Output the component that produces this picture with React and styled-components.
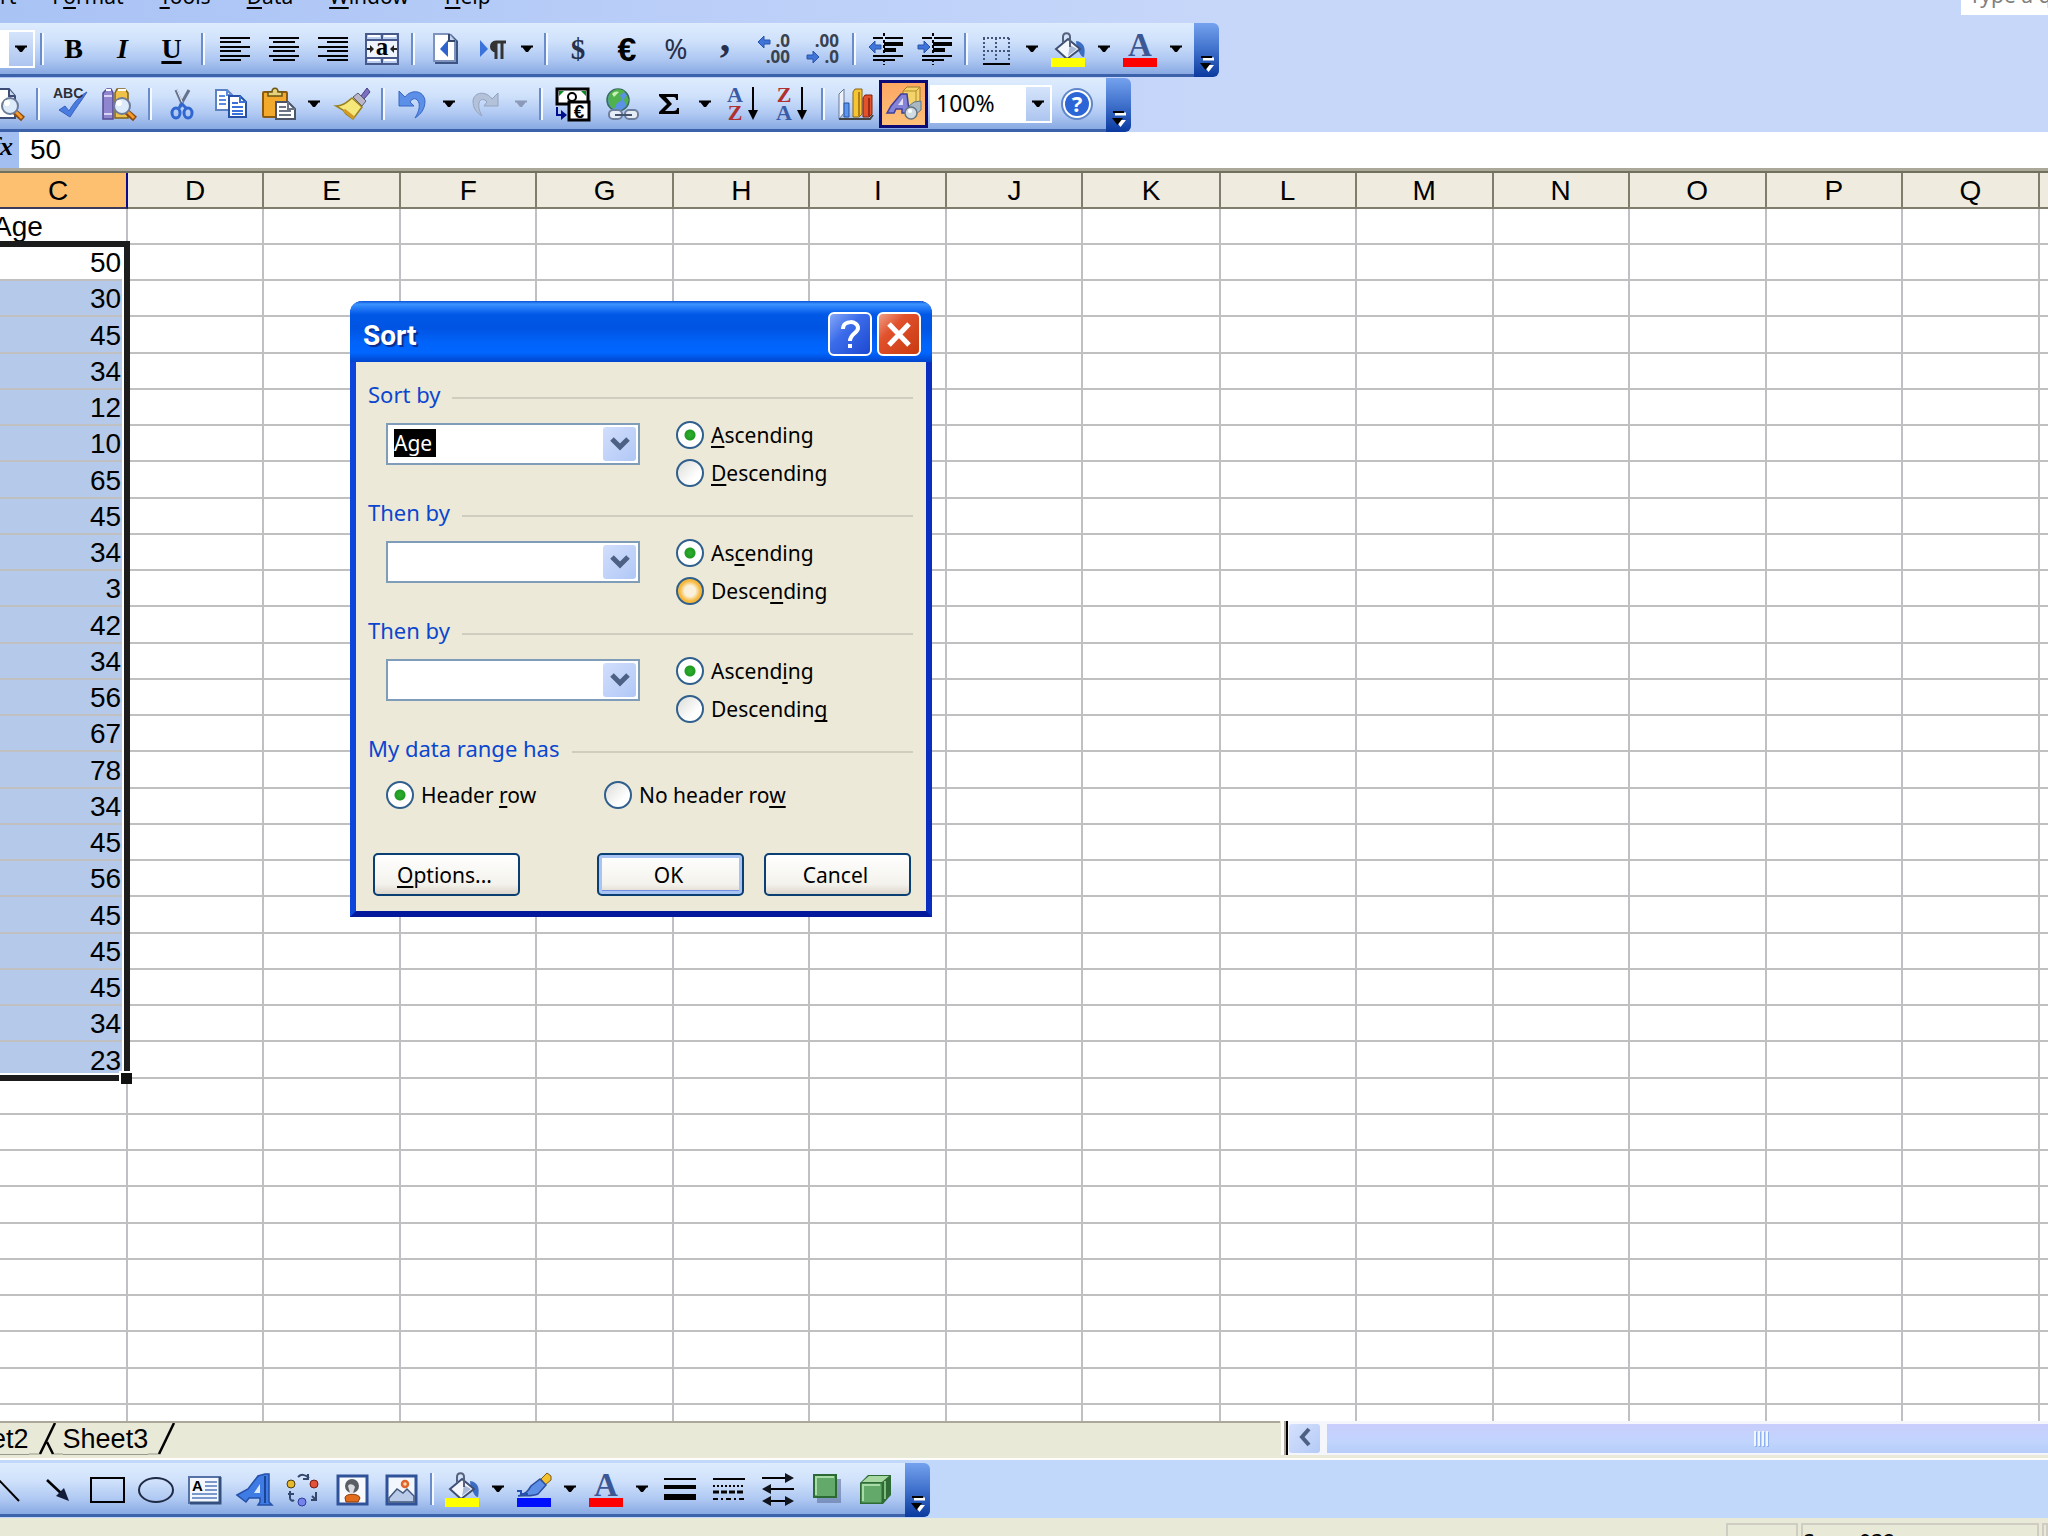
import React from "react";
import styled, { createGlobalStyle, css } from "styled-components";

const UI = `"Noto Sans", "Open Sans", sans-serif`;
const SHEET = `"Liberation Sans", Arial, sans-serif`;
const SERIF = `"Liberation Serif", "Times New Roman", serif`;

const Global = createGlobalStyle`
  *, *::before, *::after { box-sizing: border-box; }
  html, body { margin: 0; height: 100%; overflow: hidden; }
  body { font-family: ${UI}; font-size: 21px; color: #000; background: #ece9d8; }
  #root { height: 100%; }
  button, input, select { font: inherit; color: inherit; margin: 0; }
  u { text-decoration-thickness: 2px; text-underline-offset: 3px; text-decoration-skip-ink: none; }
`;

const App_ = styled.div`
  position: relative;
  display: flex;
  flex-direction: column;
  height: 100vh;
  overflow: hidden;
`;

/* ---------- docks and toolbars ---------- */

const TopDock = styled.header`
  display: flex;
  flex-direction: column;
  align-items: flex-start;
  gap: 1px;
  background: linear-gradient(90deg, #a9c3f5 0, #c7d7fa 60%);
`;

const MenuBar = styled.nav`
  display: flex;
  justify-content: space-between;
  align-items: flex-end;
  width: 100%;
  height: 22px;
  overflow: hidden;
`;

const MenuList = styled.div`
  display: flex;
  gap: 36px;
  margin-left: -42px;
  padding-bottom: 12px;
`;

const MenuItem = styled.button`
  padding: 0;
  border: 0;
  background: none;
  line-height: 28px;
`;

const Question = styled.input`
  width: 87px;
  height: 32px;
  margin-bottom: 7px;
  padding: 0 0 8px 8px;
  border: 0;
  background: #fff;
  line-height: 28px;
  &::placeholder { color: #808080; opacity: 1; }
`;

const Bar = styled.div`
  display: flex;
  height: 54px;
  margin-left: ${(p) => p.$shift || 0}px;
`;

const BarBody = styled.div`
  display: flex;
  align-items: center;
  padding-right: 5px;
  border-bottom: 3px solid #3b62ab;
  background: linear-gradient(#deecfd 0, #cfe1fb 35%, #b0c9f3 70%, #88a9e2 100%);
`;

const BarEnd = styled.button`
  display: flex;
  align-items: flex-end;
  justify-content: center;
  width: 25px;
  height: 54px;
  padding: 0 0 4px;
  border: 0;
  border-radius: 0 6px 6px 0;
  background: linear-gradient(#74a2ee 0, #3f70cb 50%, #0a3a9f 100%);
`;

const Divider = styled.span`
  width: 4px;
  height: 32px;
  margin: 0 5px;
  border-left: 2px solid #6a8ccb;
  border-right: 2px solid #f4f8ff;
`;

const Tool = styled.button`
  display: flex;
  align-items: center;
  justify-content: center;
  width: ${(p) => (p.$split ? 46 : 49)}px;
  height: 48px;
  padding: 0;
  border: 0;
  background: none;
  ${(p) =>
    p.$pressed &&
    css`
      border: 3px solid #0b0b78;
      background: linear-gradient(#fda762, #fdc07a);
    `}
`;

const Drop = styled(Tool)`
  width: ${(p) => (p.$narrow ? 24 : 26)}px;
`;

const Letter = styled.span`
  font: ${(p) => (p.$italic ? "italic " : "")}bold 28px/32px ${SERIF};
  text-decoration: ${(p) => (p.$under ? "underline" : "none")};
  text-decoration-thickness: 3px;
  text-underline-offset: 3px;
`;

const Icon = styled.svg`
  display: block;
  width: 36px;
  height: 36px;
  overflow: visible;
`;

const BarSelect = styled.label`
  display: grid;
  grid-template-columns: 1fr 24px;
  width: ${(p) => p.$width}px;
  height: 38px;
  border: 2px solid #fff;
  background: #fff;
  margin-left: ${(p) => p.$before || 0}px;
  & > select {
    appearance: none;
    min-width: 0;
    padding: 0 0 2px 4px;
    border: 0;
    background: #fff;
    font-size: 23px;
    line-height: 28px;
  }
  & > span {
    display: flex;
    align-items: center;
    justify-content: center;
    background: linear-gradient(#d5e4fb, #adc5ef);
  }
`;

const Caret = ({ faded }) => (
  <svg width="12" height="8" viewBox="0 0 12 8">
    <path d="M0 0.500H12V2.500H10.500L7 7H5L1.500 2.500H0Z" fill={faded ? "#8b9ab8" : "#000"} />
  </svg>
);

const EndCap = ({ label }) => (
  <BarEnd aria-label={label}>
    <svg width="16" height="18" viewBox="0 0 16 18">
      <path d="M4 4H15" stroke="#fff" strokeWidth="3" />
      <path d="M2 2H13" stroke="#000" strokeWidth="2" />
      <path d="M4 10H15L9.500 17Z" fill="#fff" />
      <path d="M1 8H12L6.500 15Z" fill="#000" />
    </svg>
  </BarEnd>
);

/* ---------- icons ---------- */

const rows = (list, w = 2) =>
  list.map(([x1, y, x2, t], i) => (
    <path key={i} d={`M${x1} ${y}H${x2}`} stroke="#000" strokeWidth={t || w} />
  ));

const AlignLeft = () => <Icon>{rows([[3, 7, 33], [3, 11, 24], [3, 16, 33], [3, 20, 24], [3, 25, 33], [3, 29, 24]])}</Icon>;
const AlignCenter = () => <Icon>{rows([[3, 7, 33], [7, 11, 29], [3, 16, 33], [7, 20, 29], [3, 25, 33], [7, 29, 29]])}</Icon>;
const AlignRight = () => <Icon>{rows([[3, 7, 33], [12, 11, 33], [3, 16, 33], [12, 20, 33], [3, 25, 33], [12, 29, 33]])}</Icon>;

const MergeIcon = () => (
  <Icon>
    <rect x="2" y="3" width="32" height="30" fill="#b9cdf0" stroke="#46598a" strokeWidth="2" />
    <path d="M3 9H33M3 27H33M18 3V9M18 27V33" stroke="#46598a" strokeWidth="2" />
    <path d="M4 5H16M20 5H32M4 29H16M20 29H32" stroke="#fff" strokeWidth="2" />
    <rect x="3" y="10" width="30" height="16" fill="#eef3fc" />
    <text x="18" y="24" textAnchor="middle" fontFamily="Liberation Serif, serif" fontWeight="bold" fontSize="25">a</text>
    <path d="M3 18H9M27 18H33" stroke="#222" strokeWidth="2" />
    <path d="M6 14L10 18L6 22ZM30 14L26 18L30 22Z" fill="#222" />
  </Icon>
);

const PageIcon = () => (
  <Icon>
    <path d="M8 3H24L31 10V33H8Z" fill="#3d5584" />
    <path d="M7 3H22L28 10V30H7Z" fill="#fff" stroke="#7d93bd" strokeWidth="2" />
    <path d="M22 3V10H28" fill="#c6d4ec" stroke="#33466e" strokeWidth="2" />
    <path d="M21 9V26L13 18Z" fill="#2f62cc" />
  </Icon>
);

const PilcrowIcon = () => (
  <Icon>
    <path d="M6 9V26L14 18Z" fill="#3a72dc" />
    <path d="M32 11H22C16 11 16 20 22 20V28M22 11V28M28 11V28" fill="none" stroke="#333" strokeWidth="3" />
    <path d="M18 12H23V19H19Z" fill="#333" />
  </Icon>
);

const GlyphIcon = ({ children, font = "Liberation Serif, serif", size = 32, weight = "bold", fill = "#26304a", y = 28 }) => (
  <Icon>
    <text x="18" y={y} textAnchor="middle" fontFamily={font} fontWeight={weight} fontSize={size} fill={fill}>{children}</text>
  </Icon>
);

const Arrow = ({ x, y, left }) => (
  <path
    transform={`translate(${x} ${y})`}
    d={left ? "M12 -2H6V-6L0 0L6 6V2H12Z" : "M0 -2H6V-6L12 0L6 6V2H0Z"}
    fill="#3f74d8"
    stroke="#2a54ab"
  />
);

const DecimalIcon = ({ less }) => (
  <Icon fontFamily="Noto Sans, sans-serif" fontWeight="bold" fontSize="17" fill="#39424f">
    <text x="34" y="16" textAnchor="end">{less ? ".00" : ".0"}</text>
    <text x="34" y="32" textAnchor="end">{less ? ".0" : ".00"}</text>
    {less ? <Arrow x={2} y={26} /> : <Arrow x={2} y={11} left />}
  </Icon>
);

const IndentIcon = ({ out }) => (
  <Icon>
    {rows([[5, 7, 15], [17, 7, 35], [5, 25, 35], [5, 29, 15], [17, 29, 27]])}
    {rows([[16, 13, 35], [16, 19, 28]], 4)}
    <path d="M16 2V6M16 9V26M16 28V34" stroke="#000" strokeWidth="2" strokeDasharray="3 2" />
    {out ? <Arrow x={1} y={16} left /> : <Arrow x={1} y={16} />}
  </Icon>
);

const BordersIcon = () => (
  <Icon>
    <path d="M5 7H32M5 20H32M6 7V30M18 7V30M31 7V30" stroke="#44557c" strokeWidth="2" strokeDasharray="2 2" fill="none" />
    <path d="M5 33H32" stroke="#000" strokeWidth="2" />
  </Icon>
);

const FillIcon = () => (
  <Icon>
    <path d="M26 10C34 11 36 17 34 26C30 26 30 20 27 19Z" fill="#3c6dc4" />
    <path d="M18 8L30 18L17 28L6 18Z" fill="#f3f6fc" stroke="#3f4f74" strokeWidth="2" />
    <path d="M20 14L27 18L18 25Z" fill="#a9b8d6" />
    <path d="M13 12V6C13 1 20 1 20 6V16" fill="none" stroke="#56617c" strokeWidth="2" />
    <rect x="1" y="27" width="34" height="9" fill="#ff0" />
  </Icon>
);

const FontColorIcon = () => (
  <Icon>
    <text x="18" y="25" textAnchor="middle" fontFamily="Liberation Serif, serif" fontWeight="bold" fontSize="33" fill="#3c5795">A</text>
    <rect x="1" y="27" width="34" height="9" fill="#f00" />
  </Icon>
);

const LineColorIcon = () => (
  <Icon>
    <path d="M25 8L31 2L35 5V9L29 14Z" fill="#f4c22f" stroke="#7a5a10" />
    <path d="M24 8L30 14L22 23C15 26 9 24 2 25C10 23 12 20 15 15Z" fill="#5d8fe6" stroke="#2a4fa0" strokeWidth="1.500" />
    <path d="M1 20H5V23H12" fill="none" stroke="#2450b0" strokeWidth="2" />
    <rect x="1" y="27" width="34" height="9" fill="#0010ff" />
  </Icon>
);

const Magnifier = () => (
  <>
    <path d="M26 26L34 33" stroke="#8a4a10" strokeWidth="6" />
    <path d="M26 25L33 32" stroke="#f29a2e" strokeWidth="3" />
    <circle cx="21" cy="20" r="8" fill="#dceafa" stroke="#6d7c98" strokeWidth="2" />
    <circle cx="18" cy="17" r="3" fill="#fff" />
  </>
);

const PreviewIcon = () => (
  <Icon>
    <path d="M2 3H20L26 10V32H2Z" fill="#fff" stroke="#3c4e78" strokeWidth="2" />
    <path d="M20 3V10H26" fill="#cbd7ea" stroke="#3c4e78" strokeWidth="2" />
    <Magnifier />
  </Icon>
);

const SpellIcon = () => (
  <Icon>
    <path d="M7 24L13 20L17 25C21 18 27 10 35 6C30 14 23 23 18 31Z" fill="#4a7be0" stroke="#3560bd" />
    <text x="1" y="12" fontFamily="Liberation Sans, sans-serif" fontSize="14" fontWeight="bold" fill="#2b2f38">ABC</text>
  </Icon>
);

const ResearchIcon = () => (
  <Icon>
    <path d="M2 7L6 3H10L12 7V33H2Z" fill="#9086cf" stroke="#554a94" strokeWidth="1.500" />
    <path d="M14 7L16 3H24L27 7V32H14Z" fill="#f0c14a" stroke="#80611a" strokeWidth="1.500" />
    <path d="M3 10H11M3 28H11" stroke="#d9d4f4" strokeWidth="2" />
    <path d="M5 4H10M17 4H25" stroke="#fff" strokeWidth="2" />
    <Magnifier />
  </Icon>
);

const CutIcon = () => (
  <Icon>
    <path d="M12 4L19 20M25 4L16 20" stroke="#66728c" strokeWidth="3" />
    <path d="M13 4L19 18" stroke="#eef2f8" />
    <ellipse cx="12" cy="27" rx="4" ry="5" fill="none" stroke="#2f66cf" strokeWidth="3" />
    <ellipse cx="24" cy="27" rx="4" ry="5" fill="none" stroke="#2f66cf" strokeWidth="3" />
    <path d="M15 22L18 18L22 22" stroke="#2f66cf" strokeWidth="3" fill="none" />
  </Icon>
);

const CopyIcon = () => (
  <Icon>
    <path d="M3 4H14L19 9V24H3Z" fill="#fff" stroke="#5d82c4" strokeWidth="2" />
    <path d="M14 4V9H19M6 10H12M6 14H13M6 18H13" fill="none" stroke="#5b8ae0" strokeWidth="2" />
    <path d="M16 10H27L33 16V31H16Z" fill="#fff" stroke="#2450a8" strokeWidth="2" />
    <path d="M27 10V16H33M19 17H25M19 21H30M19 25H30M19 28H30" fill="none" stroke="#3a70d8" strokeWidth="2" />
  </Icon>
);

const PasteIcon = () => (
  <Icon>
    <rect x="3" y="6" width="24" height="25" rx="1" fill="#f2a92c" stroke="#8a5b10" strokeWidth="2" />
    <path d="M8 10V6H12C12 1 18 1 18 6H22V10Z" fill="#e6d27a" stroke="#6b5616" strokeWidth="1.500" />
    <path d="M16 16H28L35 23V33H16Z" fill="#fff" stroke="#4b5468" strokeWidth="2" />
    <path d="M28 16V23H35M19 21H26M19 25H31M19 29H31" fill="none" stroke="#6b7486" strokeWidth="2" />
  </Icon>
);

const BrushIcon = () => (
  <Icon>
    <path d="M27 10L33 2L36 6L30 13Z" fill="#7a6fc0" stroke="#463c86" />
    <path d="M19 11L24 7L32 15L28 20Z" fill="#b9b6c8" stroke="#5f5b72" />
    <path d="M18 12L28 21L19 33L12 28L9 24L2 20C9 20 13 16 18 12Z" fill="#f6e77a" stroke="#9a8120" strokeWidth="1.500" />
    <path d="M10 24L20 32" stroke="#d29a24" strokeWidth="3" />
  </Icon>
);

const UndoIcon = () => (
  <Icon>
    <path d="M10 11C16 3 29 4 30 15C30 23 26 28 20 32C23 27 25 22 24 17C22 11 17 12 15 16L19 20H4V5Z" fill="#5b8fe8" stroke="#3867c4" />
  </Icon>
);

const RedoIcon = () => (
  <Icon>
    <path d="M25 13C20 5 7 5 6 15C6 22 9 26 15 30C13 26 11 22 12 17C13 12 18 13 20 16L17 20H31V7Z" fill="#b4c2d9" stroke="#93a3bf" />
  </Icon>
);

const EuroIcon = () => (
  <Icon>
    <rect x="2" y="3" width="31" height="15" fill="#fff" stroke="#000" strokeWidth="3" />
    <path d="M4 5H9L4 10ZM31 5H26L31 10Z" fill="#0a8a1e" />
    <circle cx="17" cy="11" r="4" fill="none" stroke="#000" strokeWidth="2" />
    <rect x="14" y="16" width="20" height="18" fill="#fff" stroke="#000" strokeWidth="3" />
    <text x="24" y="32" textAnchor="middle" fontFamily="Liberation Sans, sans-serif" fontWeight="bold" fontSize="19">€</text>
    <path d="M2 21V29H6" fill="none" stroke="#00108c" strokeWidth="2" />
    <path d="M6 24L12 29L6 34Z" fill="#00108c" />
  </Icon>
);

const GlobeIcon = () => (
  <Icon>
    <circle cx="14" cy="14" r="11" fill="#5a92e6" stroke="#3a6a60" strokeWidth="1.500" />
    <path d="M5 9C9 2 18 2 21 6L16 9L18 14L13 17L10 23C5 20 3 15 5 9ZM22 9L25 14L22 20L20 14Z" fill="#4fb24c" />
    <path d="M8 8C10 5 13 5 15 6L10 11Z" fill="#c8efb4" />
    <rect x="5" y="24" width="13" height="9" rx="4" fill="#e7edf7" stroke="#6e7f9d" strokeWidth="2" />
    <rect x="21" y="24" width="13" height="9" rx="4" fill="#e7edf7" stroke="#6e7f9d" strokeWidth="2" />
    <path d="M11 29H28" stroke="#44536f" strokeWidth="2" />
  </Icon>
);

const SigmaIcon = () => (
  <Icon>
    <path d="M8 8H27V14H25C25 11 24 11 21 11H15L21 18L14 25H22C25 25 26 24 26 22H28V28H8V26L16 18L8 10Z" fill="#000" />
  </Icon>
);

const SortIcon = ({ top, bottom, flip }) => (
  <Icon fontFamily="Liberation Serif, serif" fontWeight="bold" fontSize="22">
    <text x="10" y="16" textAnchor="middle" fill={flip ? "#b03030" : "#3a5ba6"}>{top}</text>
    <text x="10" y="34" textAnchor="middle" fill={flip ? "#3a5ba6" : "#b03030"}>{bottom}</text>
    <path d="M28 1V28" stroke="#000" strokeWidth="2" />
    <path d="M23 24H33L28 34Z" fill="#000" />
  </Icon>
);

const ChartIcon = () => (
  <Icon>
    <path d="M2 8L7 3V27L2 33Z" fill="#eef3fb" stroke="#6c7892" />
    <path d="M2 33H33L36 29" fill="none" stroke="#444" strokeWidth="2" />
    <path d="M7 17H12V31H7Z" fill="#5c95ee" stroke="#24509e" />
    <path d="M16 6L18 3H25V28L22 31H16Z" fill="#f6c533" stroke="#8a6514" />
    <path d="M22 6V30" stroke="#b37e14" strokeWidth="2" />
    <path d="M26 12L28 9H35V28L32 31H26Z" fill="#e2532b" stroke="#86200e" />
    <path d="M32 12V30" stroke="#9e2a14" strokeWidth="2" />
  </Icon>
);

const DrawingIcon = () => (
  <Icon>
    <path d="M17 5L21 1H34V15L30 20H17Z" fill="#f4d36a" stroke="#9c7a24" />
    <path d="M17 5H30V20M30 5L34 1" fill="none" stroke="#b48d2c" />
    <path d="M1 27L5 20L15 8H21L23 25L26 27H16V23H10L8 27Z" fill="#8583d8" stroke="#3f3f9a" strokeWidth="1.500" />
    <path d="M12 19L17 12V19Z" fill="#e2e0f8" />
    <path d="M23 20L28 16L35 15V24L30 28H24Z" fill="#a9b9c4" stroke="#65757f" />
    <circle cx="25" cy="27" r="6" fill="#d0dce2" stroke="#65757f" strokeWidth="1.500" />
    <circle cx="24" cy="25" r="2" fill="#fff" />
  </Icon>
);

const HelpIcon = () => (
  <Icon>
    <circle cx="18" cy="18" r="15" fill="#fff" stroke="#6186c9" strokeWidth="2" />
    <circle cx="18" cy="18" r="12" fill="#2c66d6" />
    <text x="18" y="26" textAnchor="middle" fontFamily="Noto Sans, sans-serif" fontWeight="bold" fontSize="22" fill="#fff">?</text>
  </Icon>
);

const LineIcon = () => <Icon><path d="M6 7L28 30" stroke="#000" strokeWidth="2" /></Icon>;
const ArrowLineIcon = () => (
  <Icon>
    <path d="M7 9L24 25" stroke="#000" strokeWidth="2.500" />
    <path d="M29 30L16 25L24 17Z" fill="#101c38" />
  </Icon>
);
const RectIcon = () => <Icon><rect x="2" y="7" width="33" height="24" fill="none" stroke="#000" strokeWidth="2" /></Icon>;
const OvalIcon = () => <Icon><ellipse cx="18" cy="19" rx="17" ry="12" fill="none" stroke="#1f2a44" strokeWidth="2" /></Icon>;

const TextBoxIcon = () => (
  <Icon>
    <rect x="2" y="6" width="31" height="26" fill="#f4f8fe" stroke="#5572a8" strokeWidth="2" />
    <path d="M33 6V32H3" fill="none" stroke="#33507f" strokeWidth="3" />
    <text x="5" y="20" fontFamily="Liberation Sans, sans-serif" fontWeight="bold" fontSize="15">A</text>
    <path d="M18 11H30M18 15H30M18 19H30M5 23H30M5 27H30" stroke="#7b98cc" strokeWidth="2" />
  </Icon>
);

const WordArtIcon = () => (
  <Icon>
    <path d="M1 24L12 18L22 5L29 3H33V31L36 34H22L24 31V27H13L10 31Z" fill="#3f7be4" stroke="#2450a8" strokeWidth="1.500" />
    <path d="M18 22L24 13V22Z" fill="#dbe9fc" />
    <path d="M29 5V32" stroke="#1c4494" strokeWidth="2" />
  </Icon>
);

const DiagramIcon = () => (
  <Icon>
    <path d="M13 6C16 3 20 3 24 7M23 3V8H18M5 20V27C5 30 8 30 9 29M3 23H9M31 21V29H26M31 29L27 25" fill="none" stroke="#34486e" strokeWidth="2" />
    <circle cx="6" cy="13" r="4" fill="#e6b92c" stroke="#4a3c10" />
    <circle cx="29" cy="13" r="4" fill="#e0523a" stroke="#7c1c10" />
    <circle cx="17" cy="31" r="4" fill="#7584ea" stroke="#2f3c9a" />
  </Icon>
);

const ClipArtIcon = () => (
  <Icon>
    <rect x="4" y="5" width="29" height="28" fill="#f8fafe" stroke="#2f5299" strokeWidth="3" />
    <path d="M11 27C11 22 25 22 26 27L24 31H12Z" fill="#e06c1c" stroke="#8c3a08" />
    <circle cx="18" cy="15" r="7" fill="#5a5f66" />
    <path d="M14 15C15 12 20 13 21 16L19 22H16Z" fill="#d8dade" />
  </Icon>
);

const PictureIcon = () => (
  <Icon>
    <rect x="4" y="5" width="29" height="28" fill="#f2f6fd" stroke="#2f5299" strokeWidth="3" />
    <path d="M6 27L14 18L20 22L24 18L31 25V31H6Z" fill="#b9cbe9" stroke="#44587e" strokeWidth="1.500" />
    <circle cx="22" cy="13" r="3" fill="#fbd9a8" stroke="#e0642c" strokeWidth="2.500" />
  </Icon>
);

const WeightIcon = () => <Icon>{rows([[2, 8, 34, 2], [2, 16, 34, 4], [2, 26, 34, 6]])}</Icon>;
const DashIcon = () => (
  <Icon stroke="#000" strokeWidth="2">
    <path d="M2 8H34" />
    <path d="M2 15H34" strokeDasharray="2 2" />
    <path d="M2 21H34" strokeDasharray="6 2" strokeWidth="3" />
    <path d="M2 28H34" strokeDasharray="5 3 2 3" />
  </Icon>
);
const ArrowStyleIcon = () => (
  <Icon>
    <path d="M2 7H32M4 18H34M5 30H31" stroke="#000" strokeWidth="2" />
    <path d="M25 2L34 7L25 12ZM11 13L2 18L11 23ZM11 25L2 30L11 35ZM25 25L34 30L25 35Z" fill="#10141c" />
  </Icon>
);
const ShadowIcon = () => (
  <Icon>
    <rect x="8" y="8" width="24" height="24" fill="#5e719c" opacity="0.600" />
    <rect x="5" y="4" width="22" height="22" fill="#62a96a" stroke="#2c6a34" strokeWidth="2" />
    <path d="M7 24V6H25" fill="none" stroke="#a9dba8" strokeWidth="2" />
  </Icon>
);
const CubeIcon = () => (
  <Icon>
    <path d="M2 12L10 4H33V24L25 33H2Z" fill="#2f6b36" />
    <path d="M4 11L11 5H31L24 11Z" fill="#a8d8a2" />
    <rect x="3" y="12" width="21" height="20" fill="#62a96a" stroke="#2c6a34" />
    <path d="M5 30V14H22" fill="none" stroke="#a9dba8" strokeWidth="2" />
    <path d="M27 10V28" stroke="#7fbd80" strokeWidth="2" />
  </Icon>
);

/* ---------- formula bar ---------- */

const FormulaBar = styled.div`
  display: flex;
  height: 36px;
  background: #fff;
`;

const FxButton = styled.button`
  display: flex;
  justify-content: flex-end;
  width: 19px;
  padding: 0 6px 0 0;
  border: 0;
  background: #a3bff2;
  font: italic bold 26px/30px ${SERIF};
`;

const FormulaInput = styled.input`
  flex: 1;
  min-width: 0;
  padding: 0 0 0 11px;
  border: 0;
  background: #fff;
  && { font: 28px/32px ${SHEET}; }
`;

/* ---------- worksheet ---------- */

const SheetArea = styled.main`
  flex: 1;
  min-height: 0;
  overflow: hidden;
  border-top: 3px solid #aca899;
  background: #fff;
`;

const Sheet = styled.table`
  table-layout: fixed;
  width: 2186px;
  margin-left: -10px;
  border-spacing: 0;
  border-top: 2px solid #716f5e;
  font: 28px/32px ${SHEET};
`;

const Col = styled.col`
  width: ${(p) => p.$width}px;
`;

const HeadCell = styled.th`
  height: 36px;
  padding: 2px 0 0;
  border-right: 2px solid ${(p) => (p.$on ? "#0a0a8c" : "#7f7d6c")};
  border-bottom: 2px solid ${(p) => (p.$on ? "#3c3a5c" : "#7f7d6c")};
  background: ${(p) => (p.$on ? "#fdbf70" : "#efebde")};
  font-weight: 400;
`;

const Row = styled.tr`
  height: 36px;
  &:nth-child(4n) { height: 37px; }
`;

const Cell = styled.td`
  position: relative;
  padding: 2px 5px 0 3px;
  border-right: 2px solid #c0c0c4;
  border-bottom: 2px solid #c0c0c0;
  background: ${(p) => (p.$selected ? "#b5caea" : "#fff")};
  text-align: ${(p) => (p.$number ? "right" : "left")};
  line-height: 32px;
`;

const Selection = styled.span`
  position: absolute;
  z-index: 1;
  top: -4px;
  left: -4px;
  right: -4px;
  height: 840px;
  border: 6px solid #1c1c1c;
  box-shadow: inset 0 0 0 2px #fff;
  &::after {
    content: "";
    position: absolute;
    right: -8px;
    bottom: -9px;
    width: 13px;
    height: 13px;
    border: 2px solid #fff;
    border-width: 2px 0 0 2px;
    background: #111;
  }
`;

/* ---------- sheet tabs and scrollbar ---------- */

const TabStrip = styled.div`
  display: grid;
  grid-template-columns: 5fr 3fr;
  height: 37px;
  background: #e9e9d8;
`;

const Tabs = styled.div`
  display: flex;
  height: 34px;
  border-top: 2px solid #aca899;
  overflow: hidden;
  & > :first-child { margin-left: -57px; }
`;

const Tab = styled.button`
  padding: 0;
  border: 0;
  border-bottom: 1px solid #9a988a;
  background: none;
  && { font: 27px/30px ${SHEET}; }
`;

const Slant = styled.svg`
  width: 34px;
  height: 32px;
`;

const ScrollTrack = styled.div`
  display: flex;
  gap: 3px;
  padding: 3px 0 2px 1px;
  height: 34px;
  margin-left: 6px;
  border-left: 2px solid #000;
  box-shadow: -2px 0 0 #aca899, -5px 0 0 #fff;
  background: #f4f6fb;
`;

const ScrollButton = styled.button`
  width: 31px;
  padding: 0;
  border: 0;
  border-radius: 3px;
  background: linear-gradient(135deg, #d5e0fd, #b4cbf6);
`;

const Thumb = styled.div`
  display: flex;
  flex: 1;
  align-items: center;
  justify-content: center;
  gap: 2px;
  margin-left: 4px;
  margin-right: -146px;
  background: linear-gradient(#c9cdfb, #c1d5fd 60%, #b6cdf8);
  & > i { width: 2px; height: 15px; background: #f2f6ff; box-shadow: 1px 1px 0 #8fb0f0; }
`;

const BottomDock = styled.footer`
  padding: 3px 0 1px;
  border-top: 2px solid #fffef8;
  background: #c2d8fb;
  overflow: hidden;
  flex: none;
`;

const StatusBar = styled.div`
  display: flex;
  flex: none;
  justify-content: flex-end;
  gap: 3px;
  height: 18px;
  padding-top: 5px;
  overflow: hidden;
  background: #e9e9d8;
`;

const StatusCell = styled.div`
  width: ${(p) => p.$width}px;
  height: 36px;
  padding-top: 3px;
  border: 2px solid #cfccc4;
  line-height: 28px;
`;

/* ---------- dialog ---------- */

const Dialog = styled.section`
  position: absolute;
  z-index: 3;
  left: 350px;
  top: 301px;
  width: 582px;
  border: solid #0a33c8;
  border-width: 0 6px 6px;
  border-color: #0c46dc #0a2fc0 #04189c #0c46dc;
  border-radius: 12px 12px 0 0;
  background: #ece9d8;
`;

const TitleBar = styled.div`
  display: flex;
  align-items: center;
  gap: 5px;
  height: 61px;
  margin: 0 -6px;
  padding: 5px 11px 0 13px;
  border-radius: 12px 12px 0 0;
  background: linear-gradient(#0a50d8 0, #3b95ff 5%, #2a80fa 10%, #0058e6 22%, #0054e3 45%, #0064fb 70%, #0066ff 85%, #0044cc 100%);
`;

const Title = styled.h1`
  flex: 1;
  margin: 0;
  padding-top: 4px;
  color: #fff;
  font: bold 28px/36px Roboto, sans-serif;
  text-shadow: 2px 2px 1px #0a2c8c;
`;

const TitleButton = styled.button`
  width: 44px;
  height: 44px;
  padding: 0;
  border: 2px solid #fff;
  border-radius: 6px;
  background: ${(p) =>
    p.$close
      ? "linear-gradient(135deg, #f0a088, #e0512c 35%, #c83a10)"
      : "linear-gradient(135deg, #86a8f8, #3c6cea 40%, #1c48d0)"};
  & > svg { display: block; }
`;

const DialogBody = styled.form`
  padding: 18px 13px 15px 12px;
`;

const Group = styled.fieldset`
  min-width: 0;
  height: ${(p) => (p.$last ? 75 : 118)}px;
  margin: 0;
  padding: 0;
  border: 0;
`;

const Legend = styled.legend`
  display: flex;
  align-items: flex-start;
  gap: 12px;
  width: 100%;
  height: 32px;
  padding: 0;
  color: #0b46cf;
  font-size: 22px;
  line-height: 28px;
  &::after {
    content: "";
    flex: 1;
    height: 2px;
    margin-top: 17px;
    background: #d0cdbe;
  }
`;

const Fields = styled.div`
  display: grid;
  grid-template-columns: 290px 1fr;
  align-items: start;
  padding: 9px 0 0 18px;
`;

const Options = styled.div`
  display: flex;
  flex-direction: column;
  gap: 10px;
`;

const HeaderOptions = styled.div`
  display: grid;
  grid-template-columns: 218px 1fr;
  padding: 15px 0 0 18px;
`;

const Choice = styled.label`
  display: flex;
  align-items: center;
  gap: 7px;
  line-height: 28px;
`;

const Radio = styled.input`
  appearance: none;
  width: 28px;
  height: 28px;
  border: 2px solid #2f5f8c;
  border-radius: 50%;
  background: ${(p) => (p.$hot ? "radial-gradient(circle closest-side, #faf1dc 45%, #f6b83c 85%)" : "linear-gradient(135deg, #dcdcd8, #fff 70%)")};
  &:checked {
    background: radial-gradient(circle, #2fae2f 0, #1f9a22 5px, #fff 6px);
  }
`;

const Combo = styled.div`
  position: relative;
  width: 254px;
  height: 42px;
  margin-top: 2px;
  border: 2px solid #7f9db9;
  background: #fff;
  & > select {
    appearance: none;
    width: 100%;
    height: 100%;
    padding: 0 0 2px 6px;
    border: 0;
    outline: 0;
    line-height: 28px;
    color: ${(p) => (p.$active ? "#fff" : "#000")};
    background: ${(p) => (p.$active ? "linear-gradient(#000, #000) 6px 4px / 42px 28px no-repeat #fff" : "#fff")};
  }
`;

const ComboArrow = styled.span`
  position: absolute;
  top: 2px;
  right: 2px;
  display: flex;
  align-items: center;
  justify-content: center;
  width: 33px;
  height: 34px;
  border-radius: 3px;
  background: linear-gradient(135deg, #d2defc, #b0c8f6);
  pointer-events: none;
`;

const Buttons = styled.div`
  display: flex;
  gap: 20px;
  margin: 44px 2px 0 5px;
  & > :first-child { margin-right: auto; }
`;

const PushButton = styled.button`
  width: 147px;
  height: 43px;
  padding: 0 4px 0 0;
  border: 2px solid #0a3f74;
  border-radius: 5px;
  background: linear-gradient(#fff, #f3f2ec 75%, #dcd6cb);
  line-height: 28px;
  ${(p) => p.$primary && css`box-shadow: inset 0 0 0 3px #a9c4f2, inset 0 -4px 0 #6f90e0;`}
`;

/* ---------- content ---------- */

const COLUMNS = ["C", "D", "E", "F", "G", "H", "I", "J", "K", "L", "M", "N", "O", "P", "Q", ""];
const AGES = [50, 30, 45, 34, 12, 10, 65, 45, 34, 3, 42, 34, 56, 67, 78, 34, 45, 56, 45, 45, 45, 34, 23];
const ROW_COUNT = 34;

const MENUS = [["", "Inse", "rt"], ["F", "o", "rmat"], ["", "T", "ools"], ["", "D", "ata"], ["", "W", "indow"], ["", "H", "elp"]];

const SplitTool = ({ label, icon, faded, narrow }) => (
  <>
    <Tool $split aria-label={label}>{icon}</Tool>
    <Drop $narrow={narrow} aria-label={`${label} options`}><Caret faded={faded} /></Drop>
  </>
);

const T = ({ label, children, ...rest }) => <Tool aria-label={label} {...rest}>{children}</Tool>;

const RadioChoice = ({ name, text, hot, checked }) => (
  <Choice>
    <Radio type="radio" name={name} $hot={hot} defaultChecked={checked} />
    <span>{text[0]}<u>{text[1]}</u>{text[2]}</span>
  </Choice>
);

const SortGroup = ({ title, id, value, up, down, hot }) => (
  <Group>
    <Legend>{title}</Legend>
    <Fields>
      <Combo $active={!!value}>
        <select aria-label={title} defaultValue={value || ""}>
          <option value={value || ""}>{value || ""}</option>
        </select>
        <ComboArrow>
          <svg width="20" height="14" viewBox="0 0 20 14"><path d="M2 2L10 10L18 2" fill="none" stroke="#4d6185" strokeWidth="5" /></svg>
        </ComboArrow>
      </Combo>
      <Options>
        <RadioChoice name={id} text={up} checked />
        <RadioChoice name={id} text={down} hot={hot} />
      </Options>
    </Fields>
  </Group>
);

export default function App() {
  return (
    <App_>
      <Global />
      <TopDock>
        <MenuBar>
          <MenuList>
            {MENUS.map(([a, b, c]) => (
              <MenuItem key={b}>{a}<u>{b}</u>{c}</MenuItem>
            ))}
          </MenuList>
          <Question aria-label="Ask a question" placeholder="Type a question for help" />
        </MenuBar>
        <Bar>
          <BarBody>
            <BarSelect $width={35}>
              <select aria-label="Font size" />
              <span><Caret /></span>
            </BarSelect>
            <Divider />
            <T label="Bold"><Letter>B</Letter></T>
            <T label="Italic"><Letter $italic>I</Letter></T>
            <T label="Underline"><Letter $under>U</Letter></T>
            <Divider />
            <T label="Align left"><AlignLeft /></T>
            <T label="Center"><AlignCenter /></T>
            <T label="Align right"><AlignRight /></T>
            <T label="Merge and center"><MergeIcon /></T>
            <Divider />
            <T label="Sheet right-to-left"><PageIcon /></T>
            <SplitTool label="Text direction" icon={<PilcrowIcon />} narrow />
            <Divider />
            <T label="Currency"><GlyphIcon size={29}>$</GlyphIcon></T>
            <T label="Euro"><GlyphIcon font="Liberation Sans, sans-serif" size={34} fill="#000" y={30}>€</GlyphIcon></T>
            <T label="Percent"><GlyphIcon font="Noto Sans, sans-serif" size={28} weight="400">%</GlyphIcon></T>
            <T label="Comma style"><GlyphIcon size={42} y={20}>,</GlyphIcon></T>
            <T label="Increase decimal"><DecimalIcon /></T>
            <T label="Decrease decimal"><DecimalIcon less /></T>
            <Divider />
            <T label="Decrease indent"><IndentIcon out /></T>
            <T label="Increase indent"><IndentIcon /></T>
            <Divider />
            <SplitTool label="Borders" icon={<BordersIcon />} />
            <SplitTool label="Fill color" icon={<FillIcon />} />
            <SplitTool label="Font color" icon={<FontColorIcon />} />
          </BarBody>
          <EndCap label="Formatting toolbar options" />
        </Bar>
        <Bar $shift={-18}>
          <BarBody>
            <T label="Print preview"><PreviewIcon /></T>
            <Divider />
            <T label="Spelling"><SpellIcon /></T>
            <T label="Research"><ResearchIcon /></T>
            <Divider />
            <T label="Cut"><CutIcon /></T>
            <T label="Copy"><CopyIcon /></T>
            <SplitTool label="Paste" icon={<PasteIcon />} />
            <T label="Format painter"><BrushIcon /></T>
            <Divider />
            <SplitTool label="Undo" icon={<UndoIcon />} />
            <SplitTool label="Redo" icon={<RedoIcon />} faded />
            <Divider />
            <T label="Euro conversion"><EuroIcon /></T>
            <T label="Hyperlink"><GlobeIcon /></T>
            <SplitTool label="AutoSum" icon={<SigmaIcon />} />
            <T label="Sort ascending"><SortIcon top="A" bottom="Z" /></T>
            <T label="Sort descending"><SortIcon top="Z" bottom="A" flip /></T>
            <Divider />
            <T label="Chart wizard"><ChartIcon /></T>
            <T label="Drawing" $pressed><DrawingIcon /></T>
            <BarSelect $width={122} $before={2}>
              <select aria-label="Zoom"><option>100%</option></select>
              <span><Caret /></span>
            </BarSelect>
            <T label="Help"><HelpIcon /></T>
          </BarBody>
          <EndCap label="Standard toolbar options" />
        </Bar>
      </TopDock>

      <FormulaBar>
        <FxButton aria-label="Insert function">fx</FxButton>
        <FormulaInput aria-label="Formula" defaultValue="50" />
      </FormulaBar>

      <SheetArea>
        <Sheet>
          <colgroup>
            {COLUMNS.map((c, i) => <Col key={i} $width={i === 0 ? 138 : i % 2 ? 136 : 137} />)}
          </colgroup>
          <thead>
            <tr>{COLUMNS.map((c, i) => <HeadCell key={i} scope="col" $on={i === 0}>{c}</HeadCell>)}</tr>
          </thead>
          <tbody>
            {Array.from({ length: ROW_COUNT }, (_, r) => (
              <Row key={r}>
                {COLUMNS.map((c, i) => {
                  if (i > 0) return <Cell key={i} />;
                  const age = AGES[r - 1];
                  return (
                    <Cell key={i} $number={age !== undefined} $selected={age !== undefined && r > 1}>
                      {r === 0 ? "Age" : age}
                      {r === 1 && <Selection />}
                    </Cell>
                  );
                })}
              </Row>
            ))}
          </tbody>
        </Sheet>
      </SheetArea>

      <TabStrip>
        <Tabs>
          <Tab>Sheet2</Tab>
          <Slant viewBox="0 0 34 32">
            <path d="M0 31H11M24 31H34" stroke="#9a988a" />
            <path d="M26 0L11 31M18 19L24 31" stroke="#000" strokeWidth="2.500" fill="none" />
          </Slant>
          <Tab>Sheet3</Tab>
          <Slant viewBox="0 0 34 32">
            <path d="M0 31H11" stroke="#9a988a" />
            <path d="M26 0L11 31" stroke="#000" strokeWidth="2.500" />
          </Slant>
        </Tabs>
        <ScrollTrack>
          <ScrollButton aria-label="Scroll left">
            <svg width="14" height="20" viewBox="0 0 14 20"><path d="M11 2L4 10L11 18" fill="none" stroke="#4d6185" strokeWidth="4" /></svg>
          </ScrollButton>
          <Thumb><i /><i /><i /><i /></Thumb>
        </ScrollTrack>
      </TabStrip>

      <BottomDock>
        <Bar $shift={-16}>
          <BarBody>
            <T label="Line"><LineIcon /></T>
            <T label="Arrow"><ArrowLineIcon /></T>
            <T label="Rectangle"><RectIcon /></T>
            <T label="Oval"><OvalIcon /></T>
            <T label="Text box"><TextBoxIcon /></T>
            <T label="WordArt"><WordArtIcon /></T>
            <T label="Diagram"><DiagramIcon /></T>
            <T label="Clip art"><ClipArtIcon /></T>
            <T label="Picture"><PictureIcon /></T>
            <Divider />
            <SplitTool label="Fill color" icon={<FillIcon />} />
            <SplitTool label="Line color" icon={<LineColorIcon />} />
            <SplitTool label="Font color" icon={<FontColorIcon />} />
            <T label="Line style"><WeightIcon /></T>
            <T label="Dash style"><DashIcon /></T>
            <T label="Arrow style"><ArrowStyleIcon /></T>
            <T label="Shadow style"><ShadowIcon /></T>
            <T label="3-D style"><CubeIcon /></T>
          </BarBody>
          <EndCap label="Drawing toolbar options" />
        </Bar>
      </BottomDock>
      <StatusBar>
        <StatusCell $width={72} />
        <StatusCell $width={238}>Sum=932</StatusCell>
        <StatusCell $width={6} />
      </StatusBar>

      <Dialog role="dialog" aria-labelledby="sort-title">
        <TitleBar>
          <Title id="sort-title">Sort</Title>
          <TitleButton aria-label="Help">
            <svg width="40" height="40" viewBox="0 0 40 40">
              <path d="M13 15C13 6 28 6 28 14C28 19 20 20 20 27M20 30V34" fill="none" stroke="#fff" strokeWidth="4" />
            </svg>
          </TitleButton>
          <TitleButton $close aria-label="Close">
            <svg width="40" height="40" viewBox="0 0 40 40">
              <path d="M10 10L30 31M30 10L10 31" stroke="#fff" strokeWidth="5" />
            </svg>
          </TitleButton>
        </TitleBar>
        <DialogBody onSubmit={(e) => e.preventDefault()}>
          <SortGroup title="Sort by" id="first" value="Age" up={["", "A", "scending"]} down={["", "D", "escending"]} />
          <SortGroup title="Then by" id="second" up={["As", "c", "ending"]} down={["Desce", "n", "ding"]} hot />
          <SortGroup title="Then by" id="third" up={["Ascend", "i", "ng"]} down={["Descendin", "g", ""]} />
          <Group $last>
            <Legend>My data range has</Legend>
            <HeaderOptions>
              <RadioChoice name="header" text={["Header ", "r", "ow"]} checked />
              <RadioChoice name="header" text={["No header ro", "w", ""]} />
            </HeaderOptions>
          </Group>
          <Buttons>
            <PushButton type="button"><u>O</u>ptions...</PushButton>
            <PushButton $primary>OK</PushButton>
            <PushButton type="button">Cancel</PushButton>
          </Buttons>
        </DialogBody>
      </Dialog>
    </App_>
  );
}
